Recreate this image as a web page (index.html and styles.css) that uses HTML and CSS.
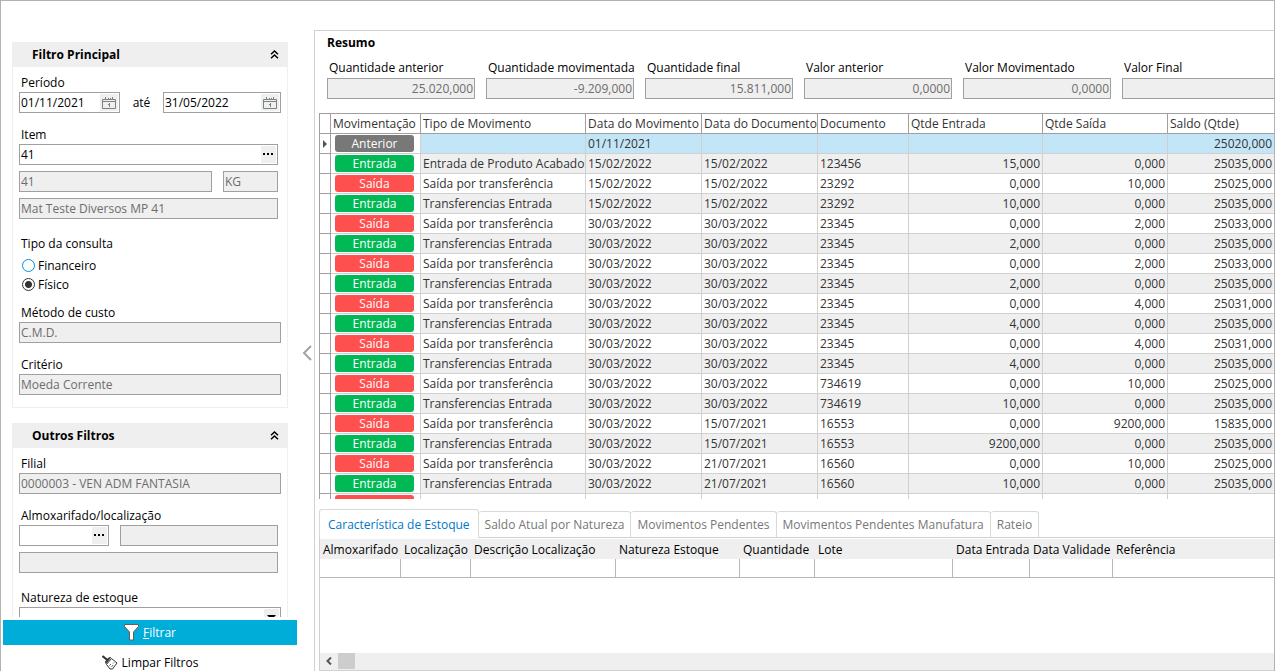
FILE: index.html
```html
<!DOCTYPE html>
<html lang="pt-BR">
<head>
    <meta charset="UTF-8">
    <title>Movimentação de Estoque</title>
    <link rel="stylesheet" href="styles.css">
</head>
<body>
    <div class="window">
        <aside class="sidebar">
            <form class="filters" id="filterForm">
                <section class="panel">
                    <div class="panel-header">
                        <h2>Filtro Principal</h2>
                        <button type="button" class="collapse" aria-label="Recolher">
                            <svg width="9" height="9" viewBox="0 0 9 9"><path d="M1 4.2 4.5 1 8 4.2M1 8.2 4.5 5 8 8.2"/></svg>
                        </button>
                    </div>
                    <div class="panel-body">
                        <div class="form-group">
                            <label for="date_from">Período</label>
                            <div class="row period">
                                <div class="field date-from">
                                    <input type="text" id="date_from" value="01/11/2021">
                                    <button type="button" class="field-button" aria-label="Calendário">
                                        <svg class="calendar" width="14" height="12" viewBox="0 0 14 12"><path d="M.5 2.5h13v9H.5zM.5 4.5h13M3.500 0v3M6.500 1v1M8.500 1v1M10.500 0v3M6 7.500h1.500M7.500 6v4"/></svg>
                                    </button>
                                </div>
                                <label class="until" for="date_to">até</label>
                                <div class="field grow">
                                    <input type="text" id="date_to" value="31/05/2022">
                                    <button type="button" class="field-button" aria-label="Calendário">
                                        <svg class="calendar" width="14" height="12" viewBox="0 0 14 12"><path d="M.5 2.5h13v9H.5zM.5 4.5h13M3.500 0v3M6.500 1v1M8.500 1v1M10.500 0v3M6 7.500h1.500M7.500 6v4"/></svg>
                                    </button>
                                </div>
                            </div>
                        </div>

                        <div class="form-group spaced inset">
                            <label for="item">Item</label>
                            <div class="field">
                                <input type="text" id="item" value="41">
                                <button type="button" class="field-button" aria-label="Pesquisar item">
                                    <svg width="11" height="3" viewBox="0 0 11 3"><path class="dots" d="M0 0h2v2H0zM4 0h2v2H4zM8 0h2v2H8z"/></svg>
                                </button>
                            </div>
                            <div class="row second">
                                <div class="field readonly grow"><input type="text" value="41" aria-label="Código" readonly></div>
                                <div class="field readonly unit"><input type="text" value="KG" aria-label="Unidade" readonly></div>
                            </div>
                            <div class="field readonly second"><input type="text" value="Mat Teste Diversos MP 41" aria-label="Descrição" readonly></div>
                        </div>

                        <fieldset class="radios">
                            <legend>Tipo da consulta</legend>
                            <label><input type="radio" name="query_type" value="financeiro">Financeiro</label>
                            <label><input type="radio" name="query_type" value="fisico" checked>Físico</label>
                        </fieldset>

                        <div class="form-group">
                            <label for="cost_method">Método de custo</label>
                            <div class="field readonly"><input type="text" id="cost_method" value="C.M.D." readonly></div>
                        </div>

                        <div class="form-group">
                            <label for="criteria">Critério</label>
                            <div class="field readonly"><input type="text" id="criteria" value="Moeda Corrente" readonly></div>
                        </div>
                    </div>
                </section>

                <section class="panel">
                    <div class="panel-header">
                        <h2>Outros Filtros</h2>
                        <button type="button" class="collapse" aria-label="Recolher">
                            <svg width="9" height="9" viewBox="0 0 9 9"><path d="M1 4.2 4.5 1 8 4.2M1 8.2 4.5 5 8 8.2"/></svg>
                        </button>
                    </div>
                    <div class="panel-body">
                        <div class="form-group">
                            <label for="branch">Filial</label>
                            <div class="field readonly"><input type="text" id="branch" value="0000003 - VEN ADM FANTASIA" readonly></div>
                        </div>

                        <div class="form-group spaced inset">
                            <label for="warehouse">Almoxarifado/localização</label>
                            <div class="row">
                                <div class="field warehouse">
                                    <input type="text" id="warehouse">
                                    <button type="button" class="field-button" aria-label="Pesquisar almoxarifado">
                                        <svg width="11" height="3" viewBox="0 0 11 3"><path class="dots" d="M0 0h2v2H0zM4 0h2v2H4zM8 0h2v2H8z"/></svg>
                                    </button>
                                </div>
                                <div class="field readonly grow"><input type="text" aria-label="Nome do almoxarifado" readonly></div>
                            </div>
                            <div class="field readonly second"><input type="text" aria-label="Localização" readonly></div>
                        </div>

                        <div class="form-group">
                            <label for="stock_nature">Natureza de estoque</label>
                            <div class="field">
                                <select id="stock_nature"><option></option></select>
                                <span class="field-button"><svg width="11" height="5" viewBox="0 0 11 5"><path class="dots" d="M1 0h9L5.500 5z"/></svg></span>
                            </div>
                        </div>
                    </div>
                </section>
            </form>

            <div class="actions">
                <button type="submit" form="filterForm" class="filter-button">
                    <svg width="15" height="17" viewBox="0 0 15 17"><path d="M.5.5h14v2L9.500 8v8h-4V8L.5 2.500z" fill="#fff" stroke="#6b5a5a"/></svg>
                    <span><u>F</u>iltrar</span>
                </button>
                <button type="reset" form="filterForm" class="clear-button">
                    <svg width="16" height="15" viewBox="0 0 16 15"><path d="M.5 1 6 5.500" stroke="#333" stroke-width="2"/><path d="M8.500 2.500 4 8.500 3.500 6.500 6.500 3z" fill="#444" stroke="#333"/><path d="M9.500 3.500 15 8l-4.500 6H8L4.500 9.500z" fill="#fff" stroke="#333"/><path d="M7.500 10.500 9 9M9.500 12l1.500-2M11 8.500l1-1" stroke="#666"/></svg>
                    <span>Limpar Filtros</span>
                </button>
            </div>
        </aside>

        <button type="button" class="splitter" aria-label="Ocultar filtros">
            <svg width="10" height="16" viewBox="0 0 10 16"><path d="M9 1 2 8l7 7"/></svg>
        </button>

        <main class="content">
            <section class="summary">
                <h2>Resumo</h2>
                <div class="summary-fields">
                    <div class="total">
                        <label for="qty_before">Quantidade anterior</label>
                        <div class="field readonly"><input type="text" id="qty_before" value="25.020,000" readonly></div>
                    </div>
                    <div class="total">
                        <label for="qty_moved">Quantidade movimentada</label>
                        <div class="field readonly"><input type="text" id="qty_moved" value="-9.209,000" readonly></div>
                    </div>
                    <div class="total">
                        <label for="qty_final">Quantidade final</label>
                        <div class="field readonly"><input type="text" id="qty_final" value="15.811,000" readonly></div>
                    </div>
                    <div class="total">
                        <label for="value_before">Valor anterior</label>
                        <div class="field readonly"><input type="text" id="value_before" value="0,0000" readonly></div>
                    </div>
                    <div class="total">
                        <label for="value_moved">Valor Movimentado</label>
                        <div class="field readonly"><input type="text" id="value_moved" value="0,0000" readonly></div>
                    </div>
                    <div class="total last">
                        <label for="value_final">Valor Final</label>
                        <div class="field readonly"><input type="text" id="value_final" readonly></div>
                    </div>
                </div>
            </section>

            <div class="grid">
                <table class="movements">
                    <colgroup>
                        <col class="w-mark"><col class="w-badge"><col class="w-type"><col class="w-date"><col class="w-date">
                        <col class="w-doc"><col class="w-in"><col class="w-out"><col>
                    </colgroup>
                    <thead>
                        <tr>
                            <th></th>
                            <th>Movimentação</th>
                            <th>Tipo de Movimento</th>
                            <th>Data do Movimento</th>
                            <th>Data do Documento</th>
                            <th>Documento</th>
                            <th>Qtde Entrada</th>
                            <th>Qtde Saída</th>
                            <th>Saldo (Qtde)</th>
                        </tr>
                    </thead>
                    <tbody id="movements"></tbody>
                </table>
            </div>

            <section class="details">
                <div class="tabs" role="tablist">
                    <button type="button" role="tab" class="tab active" aria-selected="true">Característica de Estoque</button>
                    <button type="button" role="tab" class="tab">Saldo Atual por Natureza</button>
                    <button type="button" role="tab" class="tab">Movimentos Pendentes</button>
                    <button type="button" role="tab" class="tab">Movimentos Pendentes Manufatura</button>
                    <button type="button" role="tab" class="tab">Rateio</button>
                </div>
                <div class="tab-panel">
                    <table class="stock">
                        <colgroup>
                            <col class="w-warehouse"><col class="w-location"><col class="w-description"><col class="w-nature">
                            <col class="w-quantity"><col class="w-lot"><col class="w-entry"><col class="w-expiry"><col>
                        </colgroup>
                        <thead>
                            <tr>
                                <th>Almoxarifado</th>
                                <th>Localização</th>
                                <th>Descrição Localização</th>
                                <th>Natureza Estoque</th>
                                <th>Quantidade</th>
                                <th>Lote</th>
                                <th>Data Entrada</th>
                                <th>Data Validade</th>
                                <th>Referência</th>
                            </tr>
                        </thead>
                        <tbody>
                            <tr><td></td><td></td><td></td><td></td><td></td><td></td><td></td><td></td><td></td></tr>
                        </tbody>
                    </table>
                    <div class="scrollbar">
                        <button type="button" class="scroll-left" aria-label="Rolar para a esquerda">
                            <svg width="6" height="8" viewBox="0 0 6 8"><path d="M5 .5 1.500 4 5 7.500"/></svg>
                        </button>
                        <span class="thumb"></span>
                    </div>
                </div>
            </section>
        </main>
    </div>

    <script src="app.js"></script>
</body>
</html>
```

FILE: styles.css
```css
* {
    box-sizing: border-box;
}
body {
    margin: 0;
    font-family: "Open Sans", "Noto Sans", sans-serif;
    font-size: 12px;
    line-height: 17px;
    color: #000;
    background-color: #fff;
}
button, input, select {
    font: inherit;
    color: inherit;
}
button {
    padding: 0;
    border: none;
    background: none;
    cursor: pointer;
}
h2 {
    margin: 0;
    font-size: 12px;
    font-weight: bold;
}
svg {
    display: block;
    fill: none;
}
.window {
    display: flex;
    height: 100vh;
    overflow: hidden;
    border: 1px solid #b2b2b2;
    border-bottom: none;
}

/* Sidebar */
.sidebar {
    display: flex;
    flex-direction: column;
    flex: none;
    width: 301px;
}
.filters {
    flex: 1;
    min-height: 0;
    overflow: hidden;
    padding: 41px 14px 0 11px;
}
.panel {
    margin-bottom: 15px;
    border: 1px solid #efefef;
    border-top: none;
}
.panel-header {
    display: flex;
    justify-content: space-between;
    align-items: center;
    height: 25px;
    padding: 0 8px 0 19px;
    background-color: #efefef;
}
.collapse svg {
    stroke: #000;
    stroke-width: 1.5;
}
.panel-body {
    padding: 7px 6px 12px;
}
.form-group {
    margin-bottom: 13px;
}
.form-group:last-child {
    margin-bottom: 0;
}
.spaced {
    margin-bottom: 16px;
}
.inset {
    padding-right: 3px;
}
.form-group > label, .total > label, legend {
    display: block;
    padding: 0 2px;
}
.form-group > label {
    height: 18px;
}
.row {
    display: flex;
    gap: 11px;
}
.period {
    gap: 0;
}
.until {
    width: 43px;
    text-align: center;
    line-height: 21px;
}
.field {
    display: flex;
    height: 21px;
    border: 1px solid #a0a0a0;
    background-color: #fff;
}
.field input, .field select {
    flex: 1;
    width: 100%;
    min-width: 0;
    padding: 0 1px;
    border: none;
    outline: none;
    background: none;
    appearance: none;
}
.readonly {
    background-color: #efefef;
    color: #6d6d6d;
}
.second {
    margin-top: 6px;
}
.grow {
    flex: 1;
}
.date-from {
    width: 101px;
}
.unit {
    width: 55px;
}
.warehouse {
    width: 90px;
}
.field-button {
    display: flex;
    flex: none;
    align-items: center;
    justify-content: center;
    margin: 1px;
    padding: 0 2px;
    background-color: #efefef;
}
.calendar {
    stroke: #7b837b;
}
.dots {
    fill: #000;
}
.radios {
    margin: 0 0 10px;
    padding: 0;
    border: none;
}
.radios legend {
    margin-bottom: 4px;
}
.radios label {
    display: flex;
    align-items: center;
    gap: 3px;
    height: 19px;
    padding-left: 3px;
}
.radios input {
    width: 13px;
    height: 13px;
    margin: 0;
    border: 1px solid #0091d8;
    border-radius: 50%;
    appearance: none;
}
.radios input:checked {
    border-color: #333;
    background: radial-gradient(circle, #333 3px, #fff 4px);
}
.actions {
    flex: none;
    height: 54px;
    padding: 3px 5px 0 2px;
}
.filter-button, .clear-button {
    display: flex;
    align-items: center;
    justify-content: center;
    gap: 4px;
    width: 100%;
    height: 25px;
}
.filter-button {
    background-color: #00acd8;
    color: #fff;
}
.clear-button {
    margin-top: 5px;
}
.splitter {
    flex: none;
    width: 12px;
    padding-top: 34px;
}
.splitter svg {
    stroke: #a0a5a3;
    stroke-width: 2;
}

/* Content */
.content {
    display: flex;
    flex-direction: column;
    flex: 1;
    min-width: 0;
    margin-top: 29px;
    overflow: hidden;
    border: 1px solid #d0d0d0;
    border-width: 1px 0 0 1px;
}
.summary {
    padding: 3px 0 14px 12px;
}
.summary-fields {
    display: flex;
    gap: 11px;
    margin-top: 8px;
}
.total {
    flex: none;
    width: 148px;
}
.total.last {
    flex: 1;
}
.total.last .field {
    border-right: none;
}
.total > label {
    height: 19px;
    white-space: nowrap;
}
.total input {
    text-align: right;
}
.grid {
    flex: 1;
    min-height: 0;
    margin-left: 4px;
    overflow: hidden;
}
table {
    width: 100%;
    table-layout: fixed;
    border-spacing: 0;
}
th, td {
    padding: 0 2px;
    overflow: hidden;
    text-align: left;
    font-weight: normal;
    white-space: nowrap;
}
.movements {
    border-left: 1px solid #a0a0a0;
    color: #333;
}
.movements th {
    height: 21px;
    border: 1px solid #a0a0a0;
    border-left: none;
}
.movements td {
    height: 20px;
    border: 1px solid #d0d0d0;
    border-width: 0 1px 1px 0;
}
.movements th:last-child, .movements td:last-child {
    border-right: none;
}
.movements td.mark {
    padding: 0 3px;
    border-color: #a0a0a0;
}
.movements td.badge-cell {
    padding: 0 4px;
}
.movements tr:nth-child(even) td {
    background-color: #efefef;
}
.movements tr.selected td {
    background-color: #c3e5f8;
}
.movements tbody tr td.mark, .movements tbody tr td.badge-cell {
    background-color: #fff;
}
.movements td.number {
    text-align: right;
}
.pointer {
    display: block;
    width: 4px;
    border: 4px solid transparent;
    border-left-color: #555;
    border-right: none;
}
.badge {
    display: block;
    width: 79px;
    height: 17px;
    border-radius: 3px;
    color: #fff;
    text-align: center;
}
.anterior {
    background-color: #787878;
}
.entrada {
    background-color: #00b955;
}
.saida {
    background-color: #ff5050;
}
.w-mark { width: 11px; }
.w-badge { width: 90px; }
.w-type { width: 165px; }
.w-date { width: 116px; }
.w-doc { width: 91px; }
.w-in { width: 134px; }
.w-out { width: 125px; }

/* Details */
.details {
    display: flex;
    flex-direction: column;
    flex: none;
    height: 172px;
    padding: 10px 0 0 4px;
}
.tabs {
    display: flex;
    align-items: flex-end;
    height: 28px;
}
.tab {
    height: 26px;
    padding: 0 6px;
    border: 1px solid #d9d9d9;
    border-left: none;
    border-bottom: none;
    border-radius: 3px 3px 0 0;
    color: #777;
    white-space: nowrap;
}
.tab.active {
    height: 29px;
    margin-bottom: -1px;
    padding: 0 8px;
    border-left: 1px solid #d9d9d9;
    background-color: #fff;
    color: #0078c8;
    z-index: 1;
}
.tab-panel {
    display: flex;
    flex-direction: column;
    justify-content: space-between;
    flex: 1;
    padding-top: 1px;
    border: 1px solid #d0d0d0;
    border-right: none;
}
.stock th {
    height: 20px;
    padding: 0 3px;
    background-color: #efefef;
}
.stock td {
    height: 19px;
    border: 1px solid #b8b8b8;
    border-width: 0 1px 1px 0;
}
.stock td:last-child {
    border-right: none;
}
.w-warehouse { width: 81px; }
.w-location { width: 70px; }
.w-description { width: 145px; }
.w-nature { width: 124px; }
.w-quantity { width: 75px; }
.w-lot { width: 138px; }
.w-entry { width: 77px; }
.w-expiry { width: 83px; }
.scrollbar {
    display: flex;
    height: 17px;
    padding-bottom: 1px;
    background-color: #efefef;
}
.scroll-left {
    width: 18px;
    padding-left: 6px;
}
.scroll-left svg {
    stroke: #555;
    stroke-width: 2;
}
.thumb {
    width: 17px;
    background-color: #cdcdcd;
}
```

FILE: app.js
```javascript
const rows = [
    ['Anterior', '', '01/11/2021', '', '', '', '', '25020,000'],
    ['Entrada', 'Entrada de Produto Acabados', '15/02/2022', '15/02/2022', '123456', '15,000', '0,000', '25035,000'],
    ['Saída', 'Saída por transferência', '15/02/2022', '15/02/2022', '23292', '0,000', '10,000', '25025,000'],
    ['Entrada', 'Transferencias Entrada', '15/02/2022', '15/02/2022', '23292', '10,000', '0,000', '25035,000'],
    ['Saída', 'Saída por transferência', '30/03/2022', '30/03/2022', '23345', '0,000', '2,000', '25033,000'],
    ['Entrada', 'Transferencias Entrada', '30/03/2022', '30/03/2022', '23345', '2,000', '0,000', '25035,000'],
    ['Saída', 'Saída por transferência', '30/03/2022', '30/03/2022', '23345', '0,000', '2,000', '25033,000'],
    ['Entrada', 'Transferencias Entrada', '30/03/2022', '30/03/2022', '23345', '2,000', '0,000', '25035,000'],
    ['Saída', 'Saída por transferência', '30/03/2022', '30/03/2022', '23345', '0,000', '4,000', '25031,000'],
    ['Entrada', 'Transferencias Entrada', '30/03/2022', '30/03/2022', '23345', '4,000', '0,000', '25035,000'],
    ['Saída', 'Saída por transferência', '30/03/2022', '30/03/2022', '23345', '0,000', '4,000', '25031,000'],
    ['Entrada', 'Transferencias Entrada', '30/03/2022', '30/03/2022', '23345', '4,000', '0,000', '25035,000'],
    ['Saída', 'Saída por transferência', '30/03/2022', '30/03/2022', '734619', '0,000', '10,000', '25025,000'],
    ['Entrada', 'Transferencias Entrada', '30/03/2022', '30/03/2022', '734619', '10,000', '0,000', '25035,000'],
    ['Saída', 'Saída por transferência', '30/03/2022', '15/07/2021', '16553', '0,000', '9200,000', '15835,000'],
    ['Entrada', 'Transferencias Entrada', '30/03/2022', '15/07/2021', '16553', '9200,000', '0,000', '25035,000'],
    ['Saída', 'Saída por transferência', '30/03/2022', '21/07/2021', '16560', '0,000', '10,000', '25025,000'],
    ['Entrada', 'Transferencias Entrada', '30/03/2022', '21/07/2021', '16560', '10,000', '0,000', '25035,000'],
    ['', '', '', '', '', '', '', '']
];

const badgeClass = { 'Anterior': 'anterior', 'Entrada': 'entrada', 'Saída': 'saida', '': 'saida' };

document.getElementById('movements').innerHTML = rows.map((row, i) => `
    <tr${i === 0 ? ' class="selected"' : ''}>
        <td class="mark">${i === 0 ? '<span class="pointer"></span>' : ''}</td>
        <td class="badge-cell"><span class="badge ${badgeClass[row[0]]}">${row[0]}</span></td>
        ${row.slice(1).map((text, n) => `<td${n > 3 ? ' class="number"' : ''}>${text}</td>`).join('')}
    </tr>
`).join('');
```
